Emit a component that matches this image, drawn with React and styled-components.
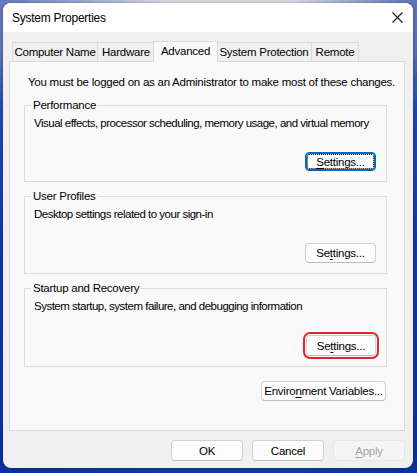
import styled, { createGlobalStyle } from 'styled-components'

const GlobalStyle = createGlobalStyle`
  html, body { margin: 0; height: 100%; }
  body {
    overflow: hidden;
    font-family: "Liberation Sans", Arial, sans-serif;
    font-size: 11.5px;
    letter-spacing: -0.25px;
    color: #000;
    background:
      linear-gradient(90deg, rgba(10,40,150,0.55) 0, rgba(10,40,150,0) 40%, rgba(10,40,150,0) 70%, rgba(10,40,150,0.6) 100%),
      linear-gradient(180deg, #d6dde6 0, #c3cfdc 50px, #3f6fd0 110px, #1848b8 260px, #0f3aa6 473px);
  }
`

const Window = styled.div`
  margin: 3px 0 0 3px;
  width: 410px;
  height: 465px;
  border-radius: 8px;
  background: #f0f0f0;
  box-shadow: 0 0 3px rgba(0, 0, 0, 0.35);
  display: flex;
  flex-direction: column;
  overflow: hidden;
`

const TitleBar = styled.div`
  height: 29px;
  flex: none;
  background: #fff;
  display: flex;
  align-items: center;
  justify-content: space-between;
  padding: 0 10px 0 9px;
`

const Title = styled.span`
  font-size: 12px;
`

const Body = styled.div`
  flex: 1;
  display: flex;
  flex-direction: column;
  padding: 0 8px 0 6px;
`

const TabStrip = styled.div`
  margin-top: 8px;
  height: 21px;
  display: flex;
  align-items: flex-end;
  padding-left: 3px;
`

const Tab = styled.div`
  width: ${p => p.$w}px;
  height: ${p => (p.$active ? 21 : 19)}px;
  box-sizing: border-box;
  border: 1px solid #dadada;
  border-bottom: ${p => (p.$active ? '1px solid #f9f9f9' : 'none')};
  margin-left: ${p => (p.$active ? -2 : -1)}px;
  margin-right: ${p => (p.$active ? -1 : 0)}px;
  margin-bottom: ${p => (p.$active ? -1 : 0)}px;
  background: ${p => (p.$active ? '#f9f9f9' : '#f0f0f0')};
  display: flex;
  align-items: center;
  justify-content: center;
  padding-bottom: ${p => (p.$active ? 2 : 0)}px;
  white-space: nowrap;
  position: ${p => (p.$active ? 'relative' : 'static')};
  &:first-child { margin-left: 0; }
`

const Panel = styled.div`
  flex: 1;
  border: 1px solid #dadada;
  background: #f9f9f9;
  padding: 13px 17px 0 14px;
  display: flex;
  flex-direction: column;
`

const Notice = styled.div`
  padding-left: 4px;
  line-height: 15px;
  white-space: nowrap;
`

const Group = styled.fieldset`
  margin: ${p => p.$top ?? 7}px 0 0;
  padding: 0 10px 10px 6px;
  border: 1px solid #dcdcdc;
  min-inline-size: 0;
  display: flex;
  flex-direction: column;
`

const Legend = styled.legend`
  padding: 0 2px;
  line-height: 14px;
`

const Desc = styled.div`
  margin-top: 4px;
  padding-left: 3px;
  line-height: 15px;
  letter-spacing: -0.5px;
  white-space: nowrap;
`

const ButtonRow = styled.div`
  display: flex;
  justify-content: flex-end;
  gap: 9px;
  margin-top: ${p => p.$top || 0}px;
  padding-right: ${p => p.$right || 0}px;
`

const Button = styled.button`
  width: ${p => p.$w || 72}px;
  height: ${p => p.$h || 20}px;
  box-sizing: border-box;
  padding: 0;
  font-family: inherit;
  font-size: inherit;
  letter-spacing: inherit;
  color: ${p => (p.disabled ? '#a3a3a3' : '#000')};
  background: ${p => (p.disabled ? '#f5f5f5' : '#fdfdfd')};
  border: 1px solid ${p => (p.disabled ? '#e6e6e6' : '#d0d0d0')};
  border-bottom-color: ${p => (p.disabled ? '#e6e6e6' : '#bdbdbd')};
  border-radius: 4px;
  white-space: nowrap;
  ${p => p.$focused && `
    border: 1px solid #0067c0;
    box-shadow: inset 0 0 0 1px #0067c0;
    outline: 1px dotted #000;
    outline-offset: -3px;
  `}
  ${p => p.$marked && `
    outline: 2px solid #e3242b;
    outline-offset: 1px;
  `}
  u { text-underline-offset: 2px; }
`

const Footer = styled.div`
  height: 37px;
  flex: none;
  display: flex;
  justify-content: flex-end;
  align-items: flex-start;
  gap: 9px;
  padding-top: 9px;
  box-sizing: border-box;
`

const CloseIcon = () => (
  <svg width="11" height="11" viewBox="0 0 11 11">
    <path d="M0.5 0.5 L10.5 10.5 M10.5 0.5 L0.5 10.5" stroke="#1a1a1a" strokeWidth="1.1" fill="none" />
  </svg>
)

export default function App () {
  return (
    <>
      <GlobalStyle />
      <Window>
        <TitleBar>
          <Title>System Properties</Title>
          <CloseIcon />
        </TitleBar>
        <Body>
          <TabStrip>
            <Tab $w={86}>Computer Name</Tab>
            <Tab $w={58}>Hardware</Tab>
            <Tab $w={65} $active>Advanced</Tab>
            <Tab $w={96}>System Protection</Tab>
            <Tab $w={48}>Remote</Tab>
          </TabStrip>
          <Panel>
            <Notice>You must be logged on as an Administrator to make most of these changes.</Notice>
            <Group $top={8}>
              <Legend>Performance</Legend>
              <Desc>Visual effects, processor scheduling, memory usage, and virtual memory</Desc>
              <ButtonRow $top={21}>
                <Button $w={71} $h={19} $focused><u>S</u>ettings...</Button>
              </ButtonRow>
            </Group>
            <Group>
              <Legend>User Profiles</Legend>
              <Desc>Desktop settings related to your sign-in</Desc>
              <ButtonRow $top={21}>
                <Button $w={71}>Se<u>t</u>tings...</Button>
              </ButtonRow>
            </Group>
            <Group>
              <Legend>Startup and Recovery</Legend>
              <Desc>System startup, system failure, and debugging information</Desc>
              <ButtonRow $top={21}>
                <Button $w={70} $h={21} $marked>Se<u>t</u>tings...</Button>
              </ButtonRow>
            </Group>
            <ButtonRow $top={14} $right={1}>
              <Button $w={125}>Enviro<u>n</u>ment Variables...</Button>
            </ButtonRow>
          </Panel>
          <Footer>
            <Button $h={21}>OK</Button>
            <Button $h={21}>Cancel</Button>
            <Button $h={21} disabled><u>A</u>pply</Button>
          </Footer>
        </Body>
      </Window>
    </>
  )
}
